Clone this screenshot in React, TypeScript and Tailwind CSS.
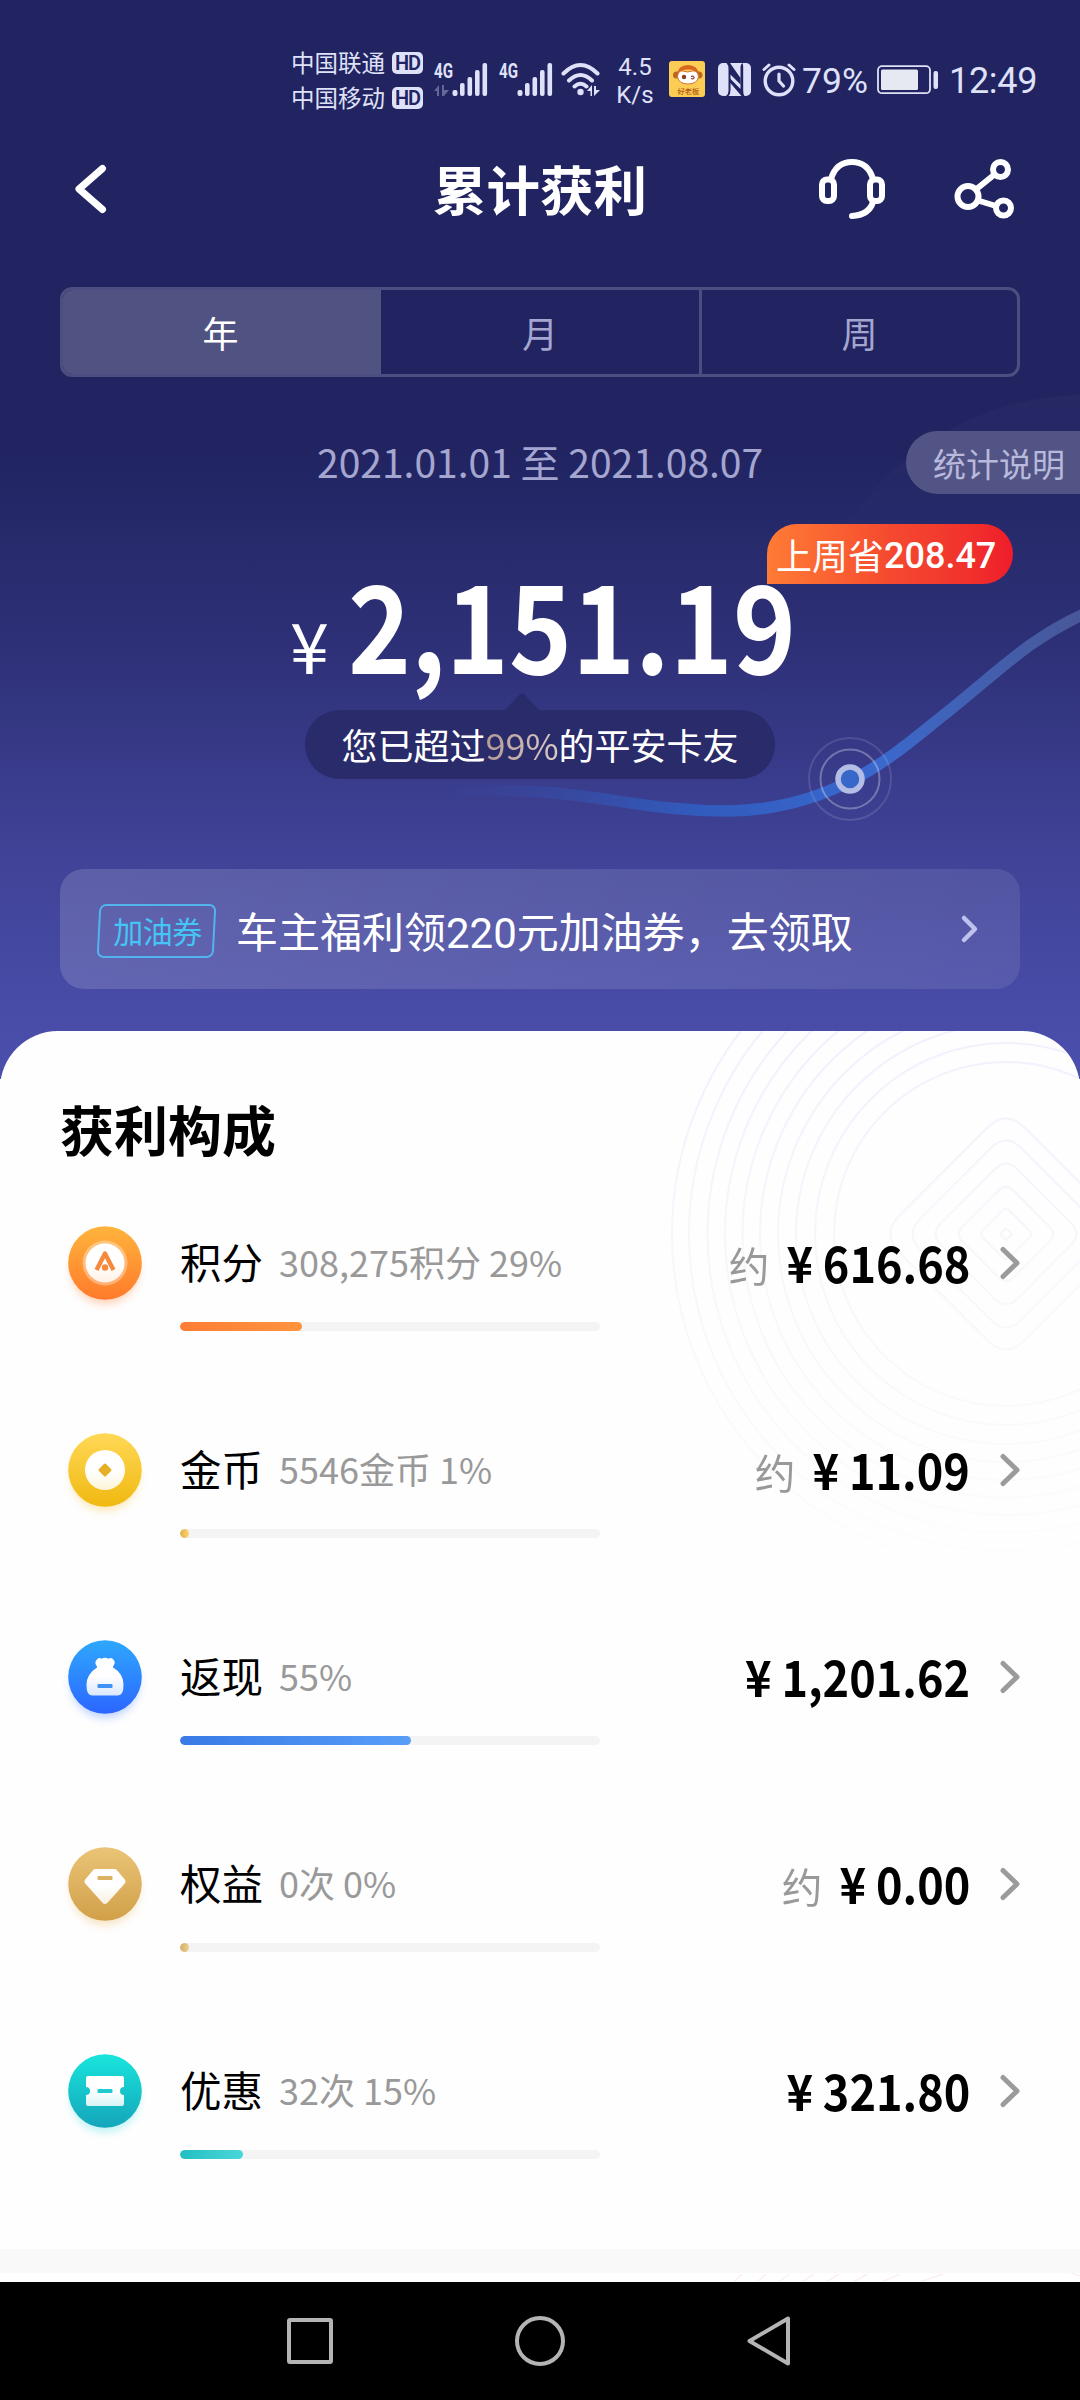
import React from 'react';

type Row = {
  name: string;
  detail: string;
  percent: number;
  approx: boolean;
  amount: string;
  bar: string;
  icon: React.ReactNode;
};

function Disc({ id, from, to, glow, children }: { id: string; from: string; to: string; glow: string; children: React.ReactNode }) {
  return (
    <svg viewBox="0 0 94 100" className="block h-[100px] w-[94px]">
      <defs>
        <linearGradient id={`${id}-fill`} x1="0" y1="0" x2="0" y2="1">
          <stop offset="0" stopColor={from} />
          <stop offset="1" stopColor={to} />
        </linearGradient>
        <linearGradient id={`${id}-white`} x1="0" y1="0" x2="0" y2="1">
          <stop offset="0.5" stopColor="#fff" />
          <stop offset="1" stopColor="#fff" stopOpacity="0.82" />
        </linearGradient>
        <filter id={`${id}-blur`} x="-30%" y="-30%" width="160%" height="160%">
          <feGaussianBlur stdDeviation="4.5" />
        </filter>
      </defs>
      <circle cx="47" cy="54" r="34" fill={glow} opacity="0.45" filter={`url(#${id}-blur)`} />
      <circle cx="47" cy="47" r="36.8" fill={`url(#${id}-fill)`} />
      {children}
    </svg>
  );
}

const rows: Row[] = [
  {
    name: '积分', detail: '308,275积分 29%', percent: 29, approx: true, amount: '616.68',
    bar: 'bg-linear-to-r from-[#ff7d36] to-[#ff943e]',
    icon: (
      <Disc id="points" from="#ffb43c" to="#ff7a2b" glow="#ff9c5c">
        <circle cx="47" cy="47" r="22.5" fill="#fff" opacity="0.35" />
        <circle cx="47" cy="47" r="19.5" fill="url(#points-white)" />
        <path d="M38.5 54 L47 37.5 L55.5 54" fill="none" stroke="#f68a3c" strokeWidth="4.4" strokeLinejoin="round" />
        <circle cx="47" cy="51.5" r="3.2" fill="#f68a3c" />
      </Disc>
    ),
  },
  {
    name: '金币', detail: '5546金币 1%', percent: 1, approx: true, amount: '11.09',
    bar: 'bg-linear-to-r from-[#e0b04a] to-[#ffd36b]',
    icon: (
      <Disc id="coin" from="#ffd856" to="#f0b911" glow="#f8cf62">
        <circle cx="47" cy="47" r="20" fill="url(#coin-white)" />
        <rect x="42" y="42" width="10" height="10" rx="1.5" fill="#e6af26" transform="rotate(45 47 47)" />
      </Disc>
    ),
  },
  {
    name: '返现', detail: '55%', percent: 55, approx: false, amount: '1,201.62',
    bar: 'bg-linear-to-r from-[#397ae6] to-[#589ef8]',
    icon: (
      <Disc id="cash" from="#2ea8fd" to="#2c66ff" glow="#6f9dff">
        <path
          d="M39 29.500 q2 -2.5 4.5 -0.8 q3.5 -1.8 7 0 q2.5 -1.7 4.8 0.8 q3 3 -0.3 7 v1 q10.500 6 10.500 17.500 q0 10.500 -5.500 10.500 h-26 q-5.500 0 -5.500 -10.500 q0 -11 10.500 -17.500 v-1 q-3.300 -4 0 -7 z"
          fill="url(#cash-white)"
        />
        <rect x="39.500" y="54" width="15" height="4" rx="1" fill="#3f93f4" />
      </Disc>
    ),
  },
  {
    name: '权益', detail: '0次 0%', percent: 0, approx: true, amount: '0.00',
    bar: 'bg-linear-to-r from-[#d5ad61] to-[#ecd096]',
    icon: (
      <Disc id="gem" from="#eac477" to="#d1a049" glow="#edc37a">
        <path d="M37.500 32 h19 q1.600 0 2.500 1.200 l8 9.500 q1.200 2 0 3.600 l-17.500 19.500 q-2.500 2.500 -5 0 l-17.500 -19.500 q-1.200 -1.600 0 -3.600 l8 -9.500 q0.900 -1.200 2.500 -1.200 z" fill="url(#gem-white)" />
        <rect x="39.500" y="39" width="15" height="4" rx="1" fill="#dcb164" />
      </Disc>
    ),
  },
  {
    name: '优惠', detail: '32次 15%', percent: 15, approx: false, amount: '321.80',
    bar: 'bg-linear-to-r from-[#20bfc2] to-[#49d7d9]',
    icon: (
      <Disc id="ticket" from="#19e5dc" to="#14a5ba" glow="#67e3ea">
        <path d="M28 34 q0 -2 2 -2 h34 q2 0 2 2 v9 a4 4 0 0 0 0 8 v9 q0 2 -2 2 h-34 q-2 0 -2 -2 v-9 a4 4 0 0 0 0 -8 z" fill="url(#ticket-white)" />
        <rect x="39.500" y="45" width="15" height="4" rx="1" fill="#1fcbce" />
      </Disc>
    ),
  },
];

function Signal({ data }: { data?: boolean }) {
  return (
    <svg viewBox="0 0 54 34" className="h-[34px] w-[54px] overflow-visible" fill="#dfe1f8">
      <text x="0" y="15" fontFamily="Roboto" fontWeight="700" fontSize="20" textLength="19" lengthAdjust="spacingAndGlyphs">4G</text>
      {data && (
        <g opacity="0.35">
          <path d="M0 28 L5 22 V33 H3 V28 Z M8 22 H10 V27 H15 L10 33 H8 Z" />
        </g>
      )}
      <rect x="18.500" y="27" width="5" height="6" rx="2" />
      <rect x="26" y="20" width="4.600" height="13" rx="2" />
      <rect x="33.500" y="14" width="4.600" height="19" rx="2" />
      <rect x="41" y="7" width="4.600" height="26" rx="2" />
      <rect x="48.500" y="0" width="4.600" height="33" rx="2" />
    </svg>
  );
}

function Carrier({ name }: { name: string }) {
  return (
    <div className="flex h-[35px] items-center gap-[7px]">
      <span className="text-[23.500px] leading-[35px] tracking-[0px]">{name}</span>
      <span className="flex h-[22px] w-[31px] items-center justify-center rounded-[5px] bg-[#dfe1f8] font-[Roboto] text-[20px] leading-[22px] font-semibold tracking-[-1px] text-[#212461]">
        HD
      </span>
    </div>
  );
}

function StatusBar() {
  return (
    <div className="flex h-[132px] items-start pt-[45px] pl-[291px] text-[#dfe1f8]">
      <div className="w-[143px]">
        <Carrier name="中国联通" />
        <Carrier name="中国移动" />
      </div>
      <div className="mt-[18px] flex items-start">
        <div className="flex w-[127px] gap-[11px]">
          <Signal data />
          <Signal />
        </div>
        <svg viewBox="0 0 40 34" className="h-[34px] w-[40px]" fill="none" stroke="#dfe1f8" strokeWidth="4" strokeLinecap="round">
          <path d="M2.500 10.500 Q19.500 -6.500 36.500 10.500 M8 17.500 Q19.500 6.500 31 17.500 M13.500 23.500 Q19.500 18 25.500 23.500" />
          <circle cx="19.500" cy="29" r="3.200" fill="#dfe1f8" stroke="none" />
          <path d="M26 28 L31 22 V33 H29.500 V28 Z M33 23 V33 L39 27 H35 V23 Z" fill="#dfe1f8" stroke="none" />
        </svg>
      </div>
      <div className="mt-[8px] w-[68px] text-center font-[Roboto] text-[24px] leading-[28px]">
        <div>4.5</div>
        <div>K/s</div>
      </div>
      <svg viewBox="0 0 36 36" className="mt-[16px] h-[36px] w-[36px]">
        <rect width="36" height="36" rx="3" fill="#fbcd55" />
        <circle cx="7.500" cy="14" r="3.500" fill="#b8681f" />
        <circle cx="30" cy="14" r="3.500" fill="#b8681f" />
        <path d="M8 14 Q9 4 19 4 Q29 4 30 14 Q26 8 19 8.500 Q12 8 8 14Z" fill="#d9661e" />
        <path d="M8.500 16 Q9 9 14 10 Q19 12 23 10 Q29 9 29.500 16 Q28 23 19 23 Q10 23 8.500 16Z" fill="#fff" stroke="#d9762a" strokeWidth="1" />
        <circle cx="15" cy="16" r="2.200" fill="#8e3d20" />
        <path d="M22 15.500 q3 -1 3 1 q0 2 -3 1" fill="none" stroke="#8e3d20" strokeWidth="1.200" />
        <text x="8.500" y="32.500" fontFamily="Noto Sans CJK SC" fontSize="7.300" fontWeight="500" fill="#b35b18">好老板</text>
      </svg>
      <svg viewBox="0 0 33 33" className="mt-[18px] ml-[13px] h-[33px] w-[33px]">
        <rect width="33" height="33" rx="5" fill="#dfe1f8" />
        <path d="M6.500 0 H12 L22.500 15 V21.500 L12.500 11.500 V27 Q12.500 31 10.500 33 H6.500 Q8.500 31 8.500 28 V5 Q8.500 2 6.500 0 Z" fill="#212461" />
        <path d="M8.500 0 Q6 0 6 0 Q7.500 2 7.500 5 V28 Q7.500 31 6 33 H8 Q10.500 31 10.500 28 V6 Q10.500 2 8.500 0 Z" fill="#dfe1f8" />
        <path d="M24.500 0 Q25.200 1.500 25.200 4 V28 Q25.200 31 26.500 33 H23.500 L11.500 19 V15 L22.500 26 V4 Q22.500 1.500 24.500 0 Z" fill="#212461" />
      </svg>
      <svg viewBox="0 0 34 34" className="mt-[18px] ml-[11px] h-[34px] w-[34px]" fill="none" stroke="#dfe1f8" strokeWidth="3.400" strokeLinecap="round">
        <circle cx="17" cy="18" r="13.800" />
        <path d="M17 11 V18 L21.500 23" strokeWidth="3.200" />
        <path d="M2 6.500 L7 2 M32 6.500 L27 2" strokeWidth="3" />
      </svg>
      <span className="mt-[15px] ml-[6px] w-[76px] font-[Roboto] text-[35.500px] leading-[43px]">79%</span>
      <svg viewBox="0 0 62 30" className="mt-[20px] ml-[-1px] h-[30px] w-[62px]">
        <rect x="1" y="1.200" width="52" height="27" rx="4" fill="none" stroke="#dfe1f8" strokeWidth="1.800" />
        <rect x="4" y="4.500" width="37" height="20.500" rx="1.500" fill="#e6e8f2" />
        <rect x="56.500" y="6" width="4.500" height="18" rx="2" fill="#dfe1f8" />
      </svg>
      <span className="mt-[15px] ml-[10px] font-[Roboto] text-[36px] leading-[43px] tracking-[-0.300px]">12:49</span>
    </div>
  );
}

function TitleBar() {
  return (
    <div className="flex h-[155px] items-start pl-[74px]">
      <svg viewBox="0 0 34 50" className="mt-[32px] h-[50px] w-[34px]" fill="none" stroke="#fff" strokeWidth="7" strokeLinecap="round" strokeLinejoin="round">
        <path d="M28.500 4.500 L5 25 L28.500 45.500" />
      </svg>
      <h1 className="ml-[325px] w-[386px] text-[53.500px] leading-[60px] font-bold text-white mt-[26px]">累计获利</h1>
      <svg viewBox="0 0 66 60" className="mt-[27px] h-[60px] w-[66px]" fill="none" stroke="#fff" strokeWidth="6" strokeLinecap="round">
        <path d="M12 20 Q17 3 33 3 Q49 3 54 20 M54 43 Q50 56 33 57" />
        <rect x="3" y="20.500" width="12" height="21.500" rx="5" />
        <rect x="51" y="20.500" width="12" height="21.500" rx="5" />
      </svg>
      <svg viewBox="0 0 60 60" className="mt-[27px] ml-[69px] h-[60px] w-[60px]" fill="none" stroke="#fff" strokeWidth="6">
        <circle cx="14" cy="37.500" r="10.500" />
        <circle cx="46.500" cy="10.500" r="7.500" />
        <circle cx="49.500" cy="49" r="7.500" />
        <path d="M22.500 30 L40.500 15.500 M24 41.500 L42 47" />
      </svg>
    </div>
  );
}

function TrendLine() {
  return (
    <svg viewBox="0 0 1080 700" className="pointer-events-none absolute top-[379px] left-0 h-[700px] w-[1080px]">
      <defs>
        <linearGradient id="trend" gradientUnits="userSpaceOnUse" x1="440" y1="0" x2="1080" y2="0">
          <stop offset="0" stopColor="#2f62c8" stopOpacity="0" />
          <stop offset="0.2" stopColor="#2f62c8" stopOpacity="0.3" />
          <stop offset="0.4" stopColor="#2f62c8" stopOpacity="0.8" />
          <stop offset="0.68" stopColor="#3a6bd2" stopOpacity="0.95" />
          <stop offset="0.85" stopColor="#4567b8" stopOpacity="0.85" />
          <stop offset="1" stopColor="#5468a8" stopOpacity="0.7" />
        </linearGradient>
        <linearGradient id="halo" x1="0" y1="0" x2="0" y2="1">
          <stop offset="0" stopColor="#fff" stopOpacity="0.022" />
          <stop offset="0.3" stopColor="#fff" stopOpacity="0" />
        </linearGradient>
      </defs>
      <circle cx="1085" cy="298" r="282" fill="url(#halo)" />
      <path d="M440 413 C590 405 620 432 730 432 C840 430 900 370 945 335 C1000 291 1030 259 1086 234" fill="none" stroke="url(#trend)" strokeWidth="11.500" />
      <circle cx="850" cy="400" r="41" fill="none" stroke="#fff" strokeOpacity="0.12" strokeWidth="2" />
      <circle cx="850" cy="400" r="29.500" fill="none" stroke="#fff" strokeOpacity="0.3" strokeWidth="2" />
      <circle cx="850" cy="400" r="12" fill="#3568c8" stroke="#b4bde6" strokeWidth="5.500" />
    </svg>
  );
}

function Contours() {
  const rings = [334, 317, 298.5, 281, 263.5, 246, 228, 210, 191, 172];
  const diamonds = [125, 101, 76, 51, 27, 6];
  return (
    <svg viewBox="640 1031 440 560" className="pointer-events-none absolute top-0 right-0 h-[560px] w-[440px]">
      <defs>
        <linearGradient id="contour" gradientUnits="userSpaceOnUse" x1="0" y1="1031" x2="0" y2="1570">
          <stop offset="0" stopColor="#f0f1fd" />
          <stop offset="0.4" stopColor="#f6f6fc" />
          <stop offset="1" stopColor="#fdfdfe" />
        </linearGradient>
      </defs>
      <g fill="none" stroke="url(#contour)" strokeWidth="2">
        {rings.map((r) => <circle key={r} cx="1006" cy="1234" r={r} />)}
        {diamonds.map((d) => {
          const c = d * 0.15;
          return (
            <path
              key={d}
              d={`M${1006 - c} ${1234 - d + c} Q1006 ${1234 - d} ${1006 + c} ${1234 - d + c} L${1006 + d - c} ${1234 - c} Q${1006 + d} 1234 ${1006 + d - c} ${1234 + c} L${1006 + c} ${1234 + d - c} Q1006 ${1234 + d} ${1006 - c} ${1234 + d - c} L${1006 - d + c} ${1234 + c} Q${1006 - d} 1234 ${1006 - d + c} ${1234 - c} Z`}
            />
          );
        })}
      </g>
    </svg>
  );
}

function Hero() {
  return (
    <div className="relative h-[1079px] bg-[linear-gradient(180deg,#212461_0px,#212461_450px,#272a6b_540px,#2d3076_640px,#383a89_760px,#404397_860px,#4649a2_960px,#4b50ad_1079px)]">
      <TrendLine />
      <div className="relative">
        <StatusBar />
        <TitleBar />
        <div className="mx-[60px] flex h-[90px] overflow-hidden rounded-[12px] border-[3px] border-[#4c4e81] text-[36px] leading-[84px]">
          <div className="-m-[3px] w-[321px] bg-[#505281] pt-[3px] text-center text-white">年</div>
          <div className="ml-[3px] w-[318px] text-center text-[#a5a6d0]">月</div>
          <div className="flex-1 border-l-[3px] border-[#4c4e81] text-center text-[#a5a6d0]">周</div>
        </div>
        <div className="flex h-[147px] items-start pt-[54px]">
          <div className="ml-[317px] w-[589px] text-[39px] leading-[60px] whitespace-nowrap text-[#a5a6d0]">2021.01.01 至 2021.08.07</div>
          <div className="flex h-[63px] flex-1 items-center rounded-l-full bg-[#525485] pl-[27px] text-[33px] leading-[60px] whitespace-nowrap text-[#b8b9dc]">
            统计说明
          </div>
        </div>
        <div className="relative h-[186px]">
          <div className="absolute top-0 left-[767px] flex h-[60px] w-[246px] items-center rounded-[30px] rounded-bl-none bg-linear-to-r from-[#ff7b35] via-[#f5492f] to-[#ee1c2b] pl-[9px] text-[36px] leading-[60px] whitespace-nowrap text-white">
            <span className="-mt-[1px]">上周省</span>
            <span className="mt-[4px] font-[Roboto] font-medium">208.47</span>
          </div>
          <div className="relative flex h-[186px] items-baseline pl-[290px] whitespace-nowrap text-white">
            <span className="w-[58px] text-[70px] leading-[186px]">¥</span>
            <span className="origin-left scale-x-[0.88] text-[121.500px] leading-[194px] font-bold">2,151.19</span>
          </div>
        </div>
        <div className="relative ml-[305px] h-[69px] w-[470px] rounded-full bg-[#292b6a] text-center text-[36px] leading-[68px] whitespace-nowrap text-white">
          <svg viewBox="0 0 36 18" className="absolute -top-[17px] left-[199px] h-[18px] w-[36px]">
            <path d="M0 18 L15 2 Q18 -1 21 2 L36 18 Z" fill="#292b6a" />
          </svg>
          您已超过<span className="bg-linear-to-r from-[#b59a96] to-[#dccbc9] bg-clip-text text-transparent">99%</span>的平安卡友
        </div>
        <div className="mx-[60px] mt-[90px] flex h-[120px] items-center rounded-[24px] bg-linear-to-r from-white/15 to-white/9 pl-[37px]">
          <div className="relative flex h-[54px] w-[120px] items-center justify-center">
            <div className="absolute inset-x-[1.500px] inset-y-0 translate-y-[2px] -translate-x-[1px] -skew-x-3 rounded-[7px] border-2 border-[#52b4ee]" />
            <span className="mt-[2px] ml-[1px] text-[30px] leading-[54px] tracking-[-0.500px] text-[#45c5f5]">加油券</span>
          </div>
          <span className="mt-[5px] ml-[19px] text-[42px] leading-[60px] whitespace-nowrap text-white">
            车主福利领<span className="font-[Roboto]">220</span>元加油券，去领取
          </span>
          <svg viewBox="0 0 20 30" className="mr-[40px] ml-auto h-[30px] w-[20px]" fill="none" stroke="#c0c2ee" strokeWidth="4.500" strokeLinecap="round" strokeLinejoin="round">
            <path d="M4 4 L15 15 L4 26" />
          </svg>
        </div>
      </div>
    </div>
  );
}

function BreakdownRow({ row }: { row: Row }) {
  return (
    <div className="flex h-[207px]">
      <div className="w-[120px] pt-[16px]">
        <div className="-ml-[2px]">{row.icon}</div>
      </div>
      <div className="w-[420px] pt-[30px]">
        <div className="flex h-[64px] items-start whitespace-nowrap">
          <span className="w-[99px] text-[41.500px] leading-[63px] text-black">{row.name}</span>
          <span className="text-[36px] leading-[62px] text-[#999]">{row.detail}</span>
        </div>
        <div className="mt-[28px] h-[9px] overflow-hidden rounded-full bg-[#f4f4f4]">
          <div className={`h-full min-w-[8.500px] rounded-full ${row.bar}`} style={{ width: `${row.percent}%` }} />
        </div>
      </div>
      <div className="flex flex-1 items-start justify-end pt-[30px]">
        <div className="flex origin-right scale-x-90 whitespace-nowrap">
          {row.approx && (
            <span className="mr-[19px] origin-right scale-x-110 text-[41px] leading-[68px] text-[#999]">约</span>
          )}
          <span className="mr-[11px] text-[50px] leading-[62px] font-bold text-black">¥</span>
          <span className="text-[50px] leading-[62px] font-bold text-black">{row.amount}</span>
        </div>
        <svg viewBox="0 0 20 34" className="mt-[16px] ml-[30px] h-[34px] w-[20px]" fill="none" stroke="#9b9b9b" strokeWidth="5" strokeLinecap="round" strokeLinejoin="round">
          <path d="M3 3.500 L17 17 L3 30.500" />
        </svg>
      </div>
    </div>
  );
}

function NavBar() {
  return (
    <div className="flex h-[118px] items-center justify-center gap-[182px] bg-black pr-[3px]">
      <div className="h-[46px] w-[46px] rounded-[3px] border-[4px] border-[#b4b4b4]" />
      <div className="h-[50px] w-[50px] rounded-full border-[4px] border-[#b4b4b4]" />
      <svg viewBox="0 0 44 50" className="h-[50px] w-[44px]" fill="none" stroke="#b4b4b4" strokeWidth="4" strokeLinejoin="round">
        <path d="M2.500 25 L41 2.500 V47.500 Z" />
      </svg>
    </div>
  );
}

export default function App() {
  return (
    <div className="h-[2400px] w-[1080px] overflow-hidden bg-white font-['Noto_Sans_CJK_SC',sans-serif]">
      <Hero />
      <div className="relative -mt-[48px] h-[1218px] overflow-hidden rounded-t-[58px] bg-[#fefefe]">
        <Contours />
        <div className="relative pl-[60px] pr-[60px] pt-[66px]">
          <h2 className="h-[103px] text-[54px] leading-[64px] font-bold text-black">获利构成</h2>
          {rows.map((row) => <BreakdownRow key={row.name} row={row} />)}
        </div>
      </div>
      <div className="h-[24px] bg-[#f9f9f9]" />
      <svg viewBox="0 0 1080 9" className="block h-[9px] w-[1080px]" fill="none" stroke="#fbeff1" strokeWidth="1.500">
        <path d="M734 9 L742 1 M757 9 L766 1 M779 9 L789 1 M802 9 L814 1 M826 9 L839 1 M853 9 L868 1 M882 9 L900 1 M920 9 L943 1 M1071 0 L1080 3" />
      </svg>
      <NavBar />
    </div>
  );
}
